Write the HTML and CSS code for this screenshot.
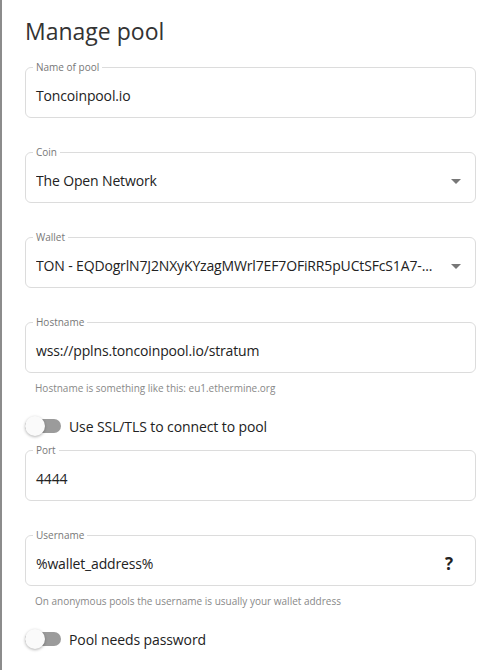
FILE: index.html
```html
<!DOCTYPE html>
<html lang="en">
<head>
    <meta charset="UTF-8">
    <meta name="viewport" content="width=device-width, initial-scale=1.0">
    <title>Manage pool</title>
    <link rel="stylesheet" href="styles.css">
</head>
<body>

    <div class="dialog">
        <h1>Manage pool</h1>

        <fieldset class="field">
            <legend>Name of pool</legend>
            <div class="value">Toncoinpool.io</div>
        </fieldset>

        <fieldset class="field">
            <legend>Coin</legend>
            <div class="value select">
                <span class="text">The Open Network</span>
                <span class="arrow"></span>
            </div>
        </fieldset>

        <fieldset class="field">
            <legend>Wallet</legend>
            <div class="value select">
                <!-- long address is cut short like the native select does -->
                <span class="text">TON - EQDogrlN7J2NXyKYzagMWrl7EF7OFiRR5pUCtSFcS1A7-...</span>
                <span class="arrow"></span>
            </div>
        </fieldset>

        <fieldset class="field">
            <legend>Hostname</legend>
            <div class="value">wss://pplns.toncoinpool.io/stratum</div>
        </fieldset>
        <p class="helper">Hostname is something like this: eu1.ethermine.org</p>

        <label class="switch-row">
            <span class="switch"><span class="thumb"></span></span>
            Use SSL/TLS to connect to pool
        </label>

        <fieldset class="field">
            <legend>Port</legend>
            <div class="value">4444</div>
        </fieldset>

        <fieldset class="field">
            <legend>Username</legend>
            <div class="value select">
                <span class="text">%wallet_address%</span>
                <span class="help">?</span>
            </div>
        </fieldset>
        <p class="helper">On anonymous pools the username is usually your wallet address</p>

        <label class="switch-row">
            <span class="switch"><span class="thumb"></span></span>
            Pool needs password
        </label>
    </div>

</body>
</html>
```

FILE: styles.css
```css
body {
    margin: 0;
    background: #fff;
    font-family: "Open Sans", Arial, sans-serif;
    color: #222;
    border-left: 2px solid #8c8c8c;
    min-height: 670px;
    box-sizing: border-box;
}
.dialog {
    padding: 16px 15px 0 23px;
}
h1 {
    margin: 0 0 15px;
    font-size: 23px;
    line-height: 30px;
    font-weight: 400;
    color: #333;
}
.field {
    margin: 0 0 28px;
    padding: 13px 10px 11px;
    border: 1px solid #dcdcdc;
    border-radius: 6px;
    min-width: 0;
}
.field legend {
    font-size: 10px;
    line-height: 12px;
    color: #777;
    padding: 0 3px;
    margin-left: -3px;
}
.value {
    font-size: 14px;
    letter-spacing: -0.15px;
    line-height: 20px;
    color: #222;
}
.select {
    display: flex;
    align-items: center;
    gap: 10px;
}
.select .text {
    flex: 1;
    min-width: 0;
    white-space: nowrap;
    overflow: hidden;
    text-overflow: ellipsis;
}
.arrow {
    width: 0;
    height: 0;
    border-left: 5px solid transparent;
    border-right: 5px solid transparent;
    border-top: 5px solid #777;
    margin-right: 4px;
}
.help {
    font-weight: 700;
    font-size: 17px;
    color: #222;
    margin-right: 12px;
}
.helper {
    margin: -20px 0 0 10px;
    font-size: 10px;
    line-height: 14px;
    color: #888;
}
.switch-row {
    display: flex;
    align-items: center;
    gap: 8px;
    height: 24px;
    margin: 19px 0 6px;
    font-size: 14px;
    letter-spacing: -0.1px;
    color: #222;
}
.switch {
    position: relative;
    width: 36px;
    height: 14px;
    border-radius: 7px;
    background: #9b9b9b;
}
.thumb {
    position: absolute;
    left: 0;
    top: -3px;
    width: 20px;
    height: 20px;
    border-radius: 50%;
    background: #fafafa;
    box-shadow: 0 1px 3px rgba(0, 0, 0, 0.3);
}
```
